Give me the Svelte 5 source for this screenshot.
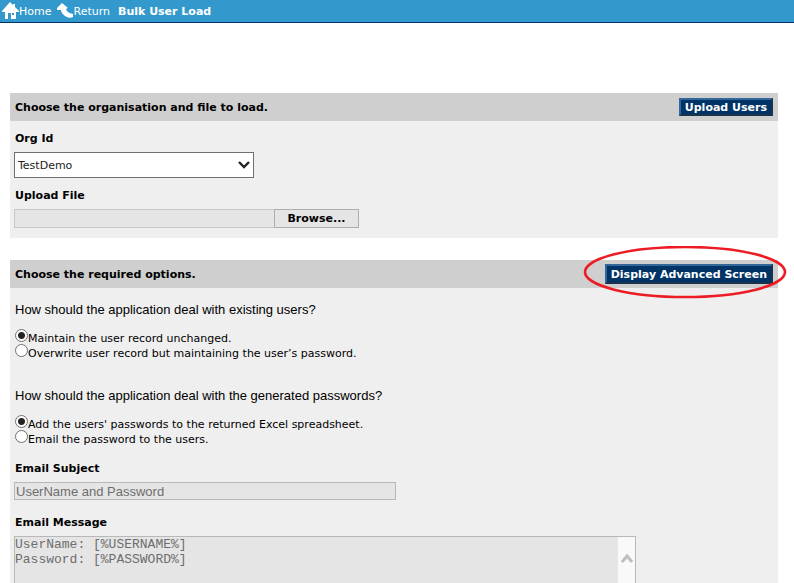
<script lang="ts">
  let org = "TestDemo";
  let existing = "maintain";
  let delivery = "excel";
  let subject = "UserName and Password";
  let message = "UserName: [%USERNAME%]\nPassword: [%PASSWORD%]";

  const existingOptions = [
    { value: "maintain", label: "Maintain the user record unchanged." },
    { value: "overwrite", label: "Overwrite user record but maintaining the user’s password." },
  ];

  const deliveryOptions = [
    { value: "excel", label: "Add the users' passwords to the returned Excel spreadsheet." },
    { value: "email", label: "Email the password to the users." },
  ];
</script>

<nav class="topbar">
  <a href="#home">
    <svg width="17" height="18" viewBox="0 0 17 18">
      <path fill="#fff" d="M8 0 L11 3 V2 H13 V5 L17 9 V10 H14 V17 H9 V11 H6 V17 H3 V10 H0 V9 Z" />
      <path fill="#39c" d="M10 11 H12 V13 H10 Z" />
    </svg>
    <span>Home</span>
  </a>
  <a href="#return">
    <svg width="16" height="18" viewBox="0 0 16 18">
      <path fill="#fff" d="M5 1 L11 6 L9 7 Q10 11 16 12 V15 Q12 17 8 14 Q4 11 4 8 L0 8 V6 Z" />
    </svg>
    <span>Return</span>
  </a>
  <strong>Bulk User Load</strong>
</nav>

<main>
  <section class="panel">
    <header>
      <h2>Choose the organisation and file to load.</h2>
      <button class="action">Upload Users</button>
    </header>
    <div class="content">
      <label class="title" for="org">Org Id</label>
      <div class="select">
        <select id="org" bind:value={org}>
          <option>TestDemo</option>
        </select>
        <svg width="12" height="9" viewBox="0 0 12 9">
          <path fill="none" stroke="#222" stroke-width="2.4" d="M1 1 L6 6 L11 1" />
        </svg>
      </div>
      <label class="title" for="file">Upload File</label>
      <div class="file">
        <input id="file" type="text" readonly />
        <button>Browse...</button>
      </div>
    </div>
  </section>

  <section class="panel">
    <header>
      <h2>Choose the required options.</h2>
      <div class="marked">
        <button class="action tall">Display Advanced Screen</button>
        <svg class="ring" width="204" height="54" viewBox="0 0 204 54">
          <ellipse cx="102" cy="26" rx="100" ry="25" fill="none" stroke="#ed1c24" stroke-width="2.6" />
        </svg>
      </div>
    </header>
    <div class="content">
      <fieldset>
        <legend>How should the application deal with existing users?</legend>
        {#each existingOptions as option}
          <label class="radio">
            <input type="radio" name="existing" value={option.value} bind:group={existing} />
            <span>{option.label}</span>
          </label>
        {/each}
      </fieldset>

      <fieldset>
        <legend>How should the application deal with the generated passwords?</legend>
        {#each deliveryOptions as option}
          <label class="radio">
            <input type="radio" name="delivery" value={option.value} bind:group={delivery} />
            <span>{option.label}</span>
          </label>
        {/each}
      </fieldset>

      <label class="title" for="subject">Email Subject</label>
      <input id="subject" class="subject" type="text" value={subject} disabled />

      <label class="title" for="message">Email Message</label>
      <div class="message">
        <textarea id="message" value={message} disabled></textarea>
        <div class="scroll">
          <svg width="12" height="9" viewBox="0 0 12 9">
            <path fill="none" stroke="#bfbfbf" stroke-width="3" d="M1 8 L6 2 L11 8" />
          </svg>
        </div>
      </div>
    </div>
  </section>
</main>

<style>
:global(body) {
  height: 100vh;
  overflow: hidden;
  background: #fff;
  color: #000;
  font: 11px/16px Verdana, "DejaVu Sans", sans-serif;
}

/* Top navigation */
.topbar {
  display: flex;
  align-items: center;
  height: 22px;
  padding-left: 2px;
  gap: 6px;
  background: #3399cc;
  border-bottom: 1px solid #003366;
  color: #fff;
}
.topbar a {
  display: flex;
  align-items: center;
  color: #fff;
  text-decoration: none;
}
.topbar span,
.topbar strong {
  padding-top: 2px;
}
.topbar strong {
  margin-left: 2px;
}

main {
  display: flex;
  flex-direction: column;
  gap: 22px;
  padding: 70px 16px 0 10px;
}

/* Panels */
.panel {
  background: #efefef;
}
.panel header {
  display: flex;
  align-items: center;
  justify-content: space-between;
  height: 28px;
  padding: 0 5px;
  background: #cfcfcf;
}
h2 {
  margin: 0;
  padding-top: 2px;
  font-size: 11px;
}
.content {
  display: flex;
  flex-direction: column;
  align-items: flex-start;
  padding: 10px 4px;
}
.title {
  margin: 0 1px 5px;
  font-weight: bold;
}

.action {
  height: 18px;
  padding: 1px 4px 0;
  border: 2px solid;
  border-color: #336699 #1a334d #1a334d #336699;
  background: #003366;
  color: #fff;
  font: bold 11px/14px Verdana, "DejaVu Sans", sans-serif;
}
.action.tall {
  height: 20px;
}
.marked {
  display: flex;
  position: relative;
}
.ring {
  position: absolute;
  right: -14px;
  top: -18px;
  pointer-events: none;
}

/* Organisation and file */
.select {
  display: grid;
  align-items: center;
  width: 240px;
  margin-bottom: 10px;
}
.select select {
  grid-area: 1 / 1;
  appearance: none;
  height: 26px;
  padding: 1px 3px 0;
  border: 1px solid #707070;
  border-radius: 0;
  background: #fff;
  color: #222;
  font: inherit;
}
.select svg {
  grid-area: 1 / 1;
  justify-self: end;
  margin-right: 4px;
  pointer-events: none;
}
.file {
  display: flex;
}
.file input {
  box-sizing: border-box;
  width: 260px;
  height: 19px;
  border: 1px solid #c8c8c8;
  border-right: 0;
  background: #e5e5e5;
}
.file button {
  width: 85px;
  height: 19px;
  padding: 1px 4px 0;
  border: 1px solid #adadad;
  background: #e5e5e5;
  font: bold 11px/16px Verdana, "DejaVu Sans", sans-serif;
}

/* Options */
fieldset {
  margin: 0 0 25px;
  padding: 0 1px;
  border: 0;
}
fieldset + .title {
  margin-top: -9px;
}
legend {
  margin: 0 0 11px;
  padding: 4px 0 0;
  font: 13px/16px "Liberation Sans", Arial, sans-serif;
}
.radio {
  display: flex;
  height: 15px;
}
.radio span {
  line-height: 19px;
}
.radio input {
  appearance: none;
  box-sizing: border-box;
  width: 13px;
  height: 13px;
  margin: 0;
  border: 1px solid #707070;
  border-radius: 50%;
  background: #fff;
}
.radio input:checked {
  background: radial-gradient(circle, #222 3px, #fff 4px);
}

.subject {
  box-sizing: border-box;
  width: 382px;
  height: 18px;
  margin-bottom: 15px;
  padding: 1px 1px 0;
  border: 1px solid #b8b8b8;
  background: #e5e5e5;
  color: #6d6d6d;
  font: 13px/15px "Liberation Sans", Arial, sans-serif;
}
.message {
  box-sizing: border-box;
  display: flex;
  width: 622px;
  height: 120px;
  border: 1px solid #b8b8b8;
}
.message textarea {
  flex: 1;
  padding: 0;
  border: 0;
  resize: none;
  background: #e5e5e5;
  color: #6d6d6d;
  font: 13px/15px "Liberation Mono", "Courier New", monospace;
}
.scroll {
  display: flex;
  justify-content: center;
  width: 17px;
  padding-top: 17px;
  background: #f9f9f9;
}
</style>
